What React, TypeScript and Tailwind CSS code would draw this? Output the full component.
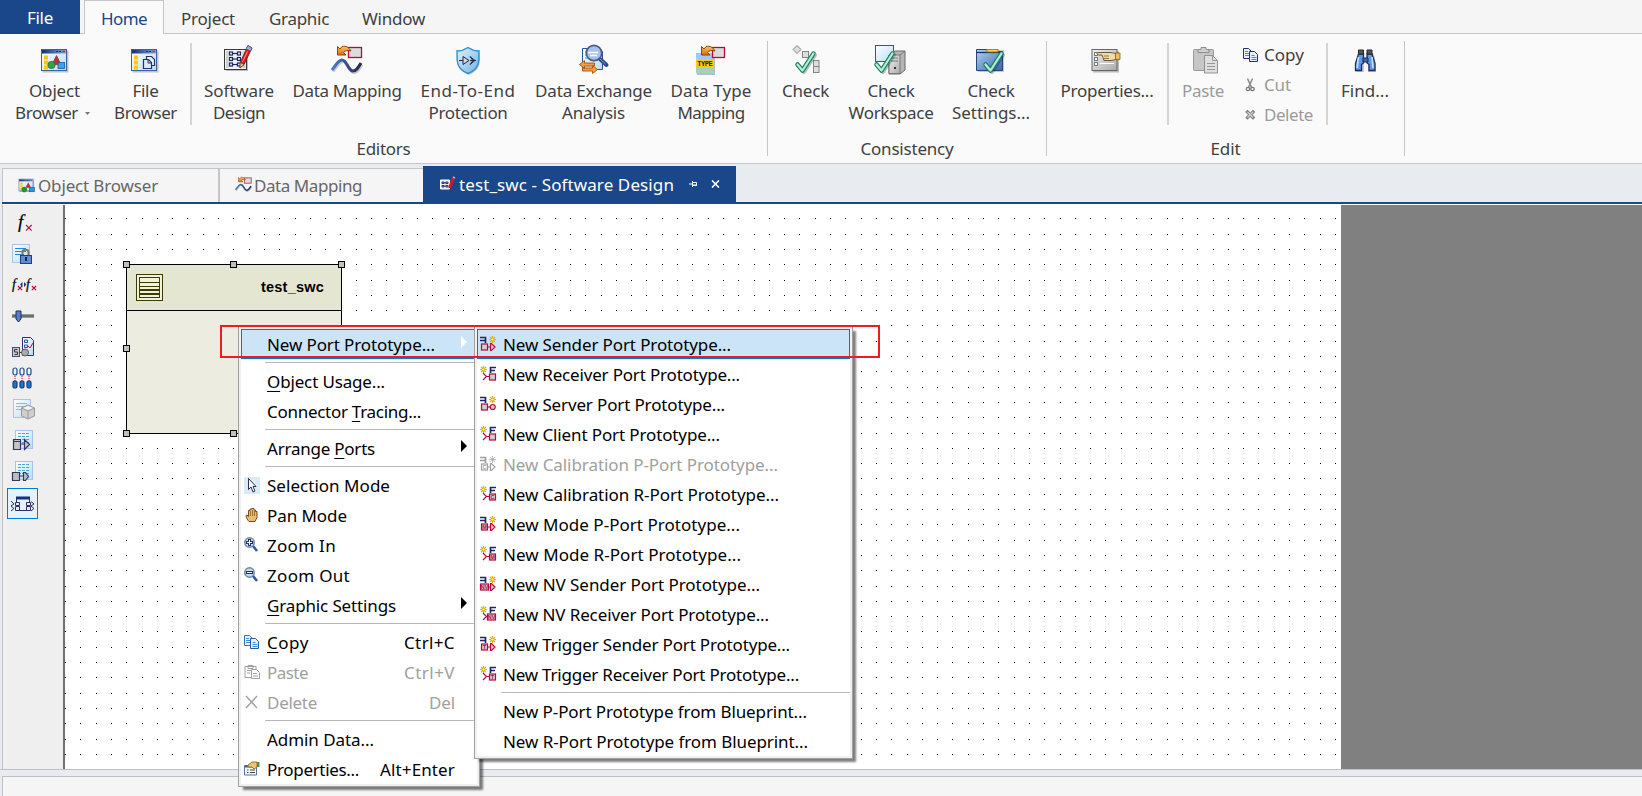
import { useLayoutEffect, useRef } from "react";
import type { ReactNode } from "react";

/* Text that spreads its letters over a given width. */
function Fit({ w, children }: { w: number; children: ReactNode }) {
  const ref = useRef<HTMLSpanElement>(null);
  useLayoutEffect(() => {
    const el = ref.current;
    if (!el) return;
    el.style.letterSpacing = "0px";
    const n = (el.textContent || "").length;
    const natural = el.getBoundingClientRect().width;
    el.style.letterSpacing = `${(w - natural) / n}px`;
  }, [w]);
  return (
    <span ref={ref} className="inline-block whitespace-pre">
      {children}
    </span>
  );
}

function Defs() {
  return (
    <svg width="0" height="0" className="absolute">
      <defs>
        <linearGradient id="title" x1="0" x2="1">
          <stop offset="0" stopColor="#12307c" />
          <stop offset="1" stopColor="#7fa6dd" />
        </linearGradient>
        <linearGradient id="pane" x1="0" x2="1" y1="0" y2="1">
          <stop offset="0" stopColor="#ffffff" />
          <stop offset="1" stopColor="#b9dcf5" />
        </linearGradient>
        <linearGradient id="wave" x1="0" x2="1">
          <stop offset="0" stopColor="#4a7fc0" />
          <stop offset="1" stopColor="#25254f" />
        </linearGradient>
        <linearGradient id="blue" x1="0" x2="1" y1="0" y2="1">
          <stop offset="0" stopColor="#e3f2fc" />
          <stop offset="1" stopColor="#6fb2e6" />
        </linearGradient>
        <linearGradient id="folder" x1="0" x2="1" y1="0" y2="1">
          <stop offset="0" stopColor="#b5d3ee" />
          <stop offset="1" stopColor="#3566ae" />
        </linearGradient>
        <linearGradient id="grey" x1="0" x2="1" y1="0" y2="1">
          <stop offset="0" stopColor="#f4f4f4" />
          <stop offset="1" stopColor="#a9a9a9" />
        </linearGradient>
        <linearGradient id="orange" x1="0" x2="0" y1="0" y2="1">
          <stop offset="0" stopColor="#ffc26b" />
          <stop offset="1" stopColor="#d8690f" />
        </linearGradient>
      </defs>
    </svg>
  );
}

const Svg = ({ s, v, children }: { s: number; v?: number; children: ReactNode }) => (
  <svg width={s} height={s} viewBox={`0 0 ${v || s} ${v || s}`} fill="none" className="shrink-0 overflow-visible">
    {children}
  </svg>
);

const Win = () => (
  <>
    <rect x="4.5" y="6.5" width="26" height="22" fill="#000" opacity=".22" />
    <rect x="3.5" y="5.5" width="25" height="21" fill="url(#pane)" stroke="#3d61a0" />
    <rect x="4" y="6" width="24" height="3.5" fill="url(#title)" />
    <path d="M18 7.5h2M21 7.5h2" stroke="#17306f" />
    <path d="M24.500 7.500h2.500" stroke="#e02020" strokeWidth="1.500" />
    <path d="M8 11.500v14" stroke="#ffc800" strokeWidth="4" strokeDasharray="4 1" />
  </>
);
const Tick = ({ x = 0, y = 0 }: { x?: number; y?: number }) => (
  <g transform={`translate(${x} ${y})`} strokeLinecap="round" strokeLinejoin="round">
    <path d="M3 14l5 6L19 3" transform="translate(1 1)" stroke="#000" opacity=".25" strokeWidth="4" />
    <path d="M2.500 13.500l5 6L18.500 2.500" stroke="#1c8068" strokeWidth="4.500" />
    <path d="M2.500 13.500l5 6L18.500 2.500" stroke="#b5f0d5" strokeWidth="2.200" />
  </g>
);
const OrangeArrow = () => (
  <path
    d="M6.500 2.500v8.500h8.500l-2.500-2.500c2-2 4.500-2.500 7.500-1.500C18 3.500 15 1.500 11 2.500L9 5z"
    fill="url(#orange)"
    stroke="#8a4508"
    strokeLinejoin="round"
  />
);

const ObjBrowser = () => (
  <Svg s={32}>
    <g transform="translate(-1 0)">
      <Win />
      <path d="M18.500 11.500l-4.500 9h9z" fill="#c23330" stroke="#7c1c1c" strokeWidth=".6" />
      <circle cx="13.500" cy="21" r="3.700" fill="#33a04c" stroke="#176a2c" strokeWidth=".6" />
      <rect x="20" y="18.500" width="6.500" height="6" fill="#38a2ee" stroke="#12589d" strokeWidth=".8" />
    </g>
  </Svg>
);
const FileBrowser = () => (
  <Svg s={32}>
    <g transform="translate(-2 0)">
      <Win />
      <path d="M18.500 21.500v-9h5l3 3v6z" fill="#eef4fb" stroke="#26306b" strokeWidth="1.200" />
      <path d="M15.500 24.500v-9h5l3 3v6z" fill="#dfeaf7" stroke="#26306b" strokeWidth="1.200" />
      <path d="M20 15.500v3.500h3.500" stroke="#26306b" />
    </g>
  </Svg>
);
const SwDesign = () => (
  <Svg s={32}>
    <rect x="3" y="7" width="22" height="20" fill="#000" opacity=".25" />
    <rect x="1.500" y="5.500" width="22" height="20" fill="#f2f2f2" stroke="#383838" />
    <path d="M3 7h2.500v17H3zM19.500 7h3v17h-3z" fill="#cfcfcf" />
    {[8, 13.5, 19].map((y) => (
      <g key={y} stroke="#1c2766" strokeWidth="1.200">
        <rect x="6.500" y={y} width="3" height="3" />
        <rect x="14.500" y={y} width="3" height="3" />
        <path d={`M10 ${y + 1.5}h4`} />
      </g>
    ))}
    <path d="M25 1.500l4 2.500-8 16.500-4 3.500.500-6z" fill="#d61a20" stroke="#6a1318" strokeWidth=".8" />
    <path d="M25 1.500l4 2.500-1.500 3-4.500-2z" fill="#9faed2" stroke="#4a4a72" strokeWidth=".7" />
    <path d="M17.200 18.500l3.800 2-4 3.500z" fill="#e8c690" stroke="#333" strokeWidth=".6" />
    <path d="M24.500 7.500l-5 10.500" stroke="#ff7a70" strokeWidth="1.200" />
  </Svg>
);
const DataMap = ({ s = 32 }: { s?: number }) => (
  <Svg s={s} v={32}>
    <rect x="17.500" y="3.500" width="13" height="10" fill="#dcdcdc" stroke="#b8093d" strokeWidth="1.300" />
    <OrangeArrow />
    <path d="M1 26C6 19 8 16 11 16c5 0 6 11 11 11 3 0 5-3 8-8" transform="translate(1 1.500)" stroke="#000" opacity=".2" strokeWidth="3" />
    <path d="M1 26C6 19 8 16 11 16c5 0 6 11 11 11 3 0 5-3 8-8" stroke="url(#wave)" strokeWidth="3" />
  </Svg>
);
const Shield = () => (
  <Svg s={32}>
    <path d="M16 3.500c3 2 6.500 3.500 11 3.500-1 4 4 16.500-11 22.500C1 23.500 6 11 5 7c4.500 0 8-1.500 11-3.500z" fill="#000" opacity=".2" transform="translate(1 1.500)" />
    <path d="M16 3.500c3 2 6.500 3.500 11 3.500-1 4 4 16.500-11 22.500C1 23.500 6 11 5 7c4.500 0 8-1.500 11-3.500z" fill="url(#blue)" stroke="#2d8fd0" strokeWidth="1.400" />
    <path d="M7 16.500h4m7 0h6M11 12.500v8l6-4zM18 12.500l5 4-5 4 3-4z" fill="#d5d5de" stroke="#26264a" />
  </Svg>
);
const DataExchange = () => (
  <Svg s={32}>
    <path d="M4.500 4.500h17l3 3v18h-20z" fill="url(#pane)" stroke="#28529b" />
    <path d="M7 8h5M7 11h4M7 14h5" stroke="#2c96dc" />
    <path d="M22 15l6.500 6" stroke="#26488b" strokeWidth="4" strokeLinecap="round" />
    <path d="M21.500 14.500l6 5.500" stroke="#7fa6dd" strokeWidth="1" />
    <circle cx="16" cy="9" r="7.700" fill="#a7c3ea" stroke="#505a80" strokeWidth="1.700" />
    <path d="M10 8.500h10M12 11.500h7" stroke="#fff" strokeWidth="1.300" />
    <path d="M1.500 20.500l5-4v2.500h10v3h-10v2.500zM19.500 25.500l-5-4v2.500h-10v3h10v2.500z" fill="#ff9c3c" stroke="#a0530d" strokeWidth=".9" />
  </Svg>
);
const TypeMap = () => (
  <Svg s={32}>
    <rect x="2" y="10" width="18" height="21" fill="#000" opacity=".25" />
    <rect x="1" y="9" width="18" height="6.500" fill="#9ccaff" />
    <rect x="1" y="15.500" width="18" height="7.500" fill="#ffc917" />
    <rect x="1" y="23" width="18" height="6.500" fill="#a0d3bf" />
    <text x="10" y="22" textAnchor="middle" textLength="15.500" fontSize="7" fontWeight="bold" fontFamily="Liberation Mono, monospace" fill="#222">
      TYPE
    </text>
    <rect x="17.500" y="3.500" width="12" height="10" fill="#dcdcdc" stroke="#b8093d" strokeWidth="1.300" />
    <OrangeArrow />
  </Svg>
);
const CheckIcon = () => (
  <Svg s={32}>
    <g fill="#dedede" stroke="#858585">
      <path d="M7 1.500l4 4-4 4-4-4z" />
      <rect x="12.500" y="7.500" width="6" height="6" />
      <rect x="23.500" y="16.500" width="5.500" height="6" />
      <rect x="23.500" y="22.500" width="5.500" height="6" />
    </g>
    <Tick x={5} y={7} />
  </Svg>
);
const CheckWs = () => (
  <Svg s={32}>
    <g transform="translate(-1 0)">
      <rect x="1.500" y="1.500" width="18" height="16" fill="url(#pane)" stroke="#2c5796" />
      <path d="M15 11l6-4h10v19l-5 4H15z" fill="#b5b5b5" stroke="#6b6b6b" />
      <path d="M15 11h11v18.500H15z" fill="url(#grey)" stroke="#777" />
      <path d="M26 11l5-4" stroke="#777" />
      <path d="M17 14h7M17 17h7" stroke="#777" />
      <path d="M20 24h2" stroke="#333" strokeWidth="2" />
      <Tick x={0} y={7} />
    </g>
  </Svg>
);
const CheckSet = () => (
  <Svg s={32}>
    <path d="M2 6h27v22H3z" fill="#000" opacity=".2" />
    <path d="M1.500 26.500v-21h10l2 2h14v19z" fill="url(#folder)" stroke="#264681" />
    <path d="M1.500 8.500h26" stroke="#173268" strokeWidth="1.300" />
    <rect x="12" y="5.500" width="11" height="2.500" fill="#ffd24a" stroke="#9a7114" strokeWidth=".8" />
    <Tick x={8} y={7} />
  </Svg>
);
const Props = () => (
  <Svg s={32}>
    <rect x="2" y="7" width="26" height="21.500" fill="#000" opacity=".25" />
    <rect x="1" y="5.500" width="25" height="21" fill="url(#grey)" stroke="#666" />
    <g fill="#fff" stroke="#777">
      <rect x="3.500" y="8.500" width="3" height="3" />
      <rect x="3.500" y="13.500" width="3" height="3" />
      <rect x="3.500" y="18.500" width="3" height="3" />
    </g>
    <path d="M9 19.500h14" stroke="#fff" />
    <path d="M6 9.500c0-1 1-1 2-1h10c3 0 4 .5 7 1v6c-2 0-3 1-5 1h-7l-1-3-1-2.500H7.500z" fill="#f2dbab" stroke="#5c4827" strokeWidth=".9" />
    <path d="M24.500 9h4.500v6.500h-4.500z" fill="#f0bd58" stroke="#855b15" strokeWidth=".8" />
    <path d="M13 12h5M13 14.500h5" stroke="#765a2b" strokeWidth=".8" />
  </Svg>
);
const PasteBig = () => (
  <Svg s={32}>
    <rect x="6.500" y="5.500" width="20" height="21" rx="1" fill="#c6c6c6" stroke="#989898" />
    <path d="M11 8.500v-3h3v-2h5v2h3v3z" fill="#cfcfcf" stroke="#8d8d8d" />
    <path d="M17.500 11.500h8l5 5v12.500h-13z" fill="#dfdfdf" stroke="#929292" />
    <path d="M25.500 11.500v5h5M20 19.500h8M20 22.500h8M20 25.500h8" stroke="#999" />
  </Svg>
);
const FindIcon = () => (
  <Svg s={32}>
    <path d="M7 13c1-2 1-4 2-5h5v19H6.500zM18 8h5c1 2 1 3 2 5l1 14h-8z" fill="#000" opacity=".2" transform="translate(1 1)" />
    <path d="M9.500 10h5v9l-2 1.500v6h-6v-7zM23 10h-5v9l2 1.500v6h6v-7z" fill="#5b9ae6" stroke="#202a5c" strokeWidth="1.300" />
    <path d="M14 14h5v4h-5z" fill="#3c67ac" stroke="#202a5c" />
    <path d="M9.500 13l-1.500 11M23 13l1 11" stroke="#c4dfff" strokeWidth="1.700" />
    <path d="M9.500 6h5v4h-5zM18 6h5v4h-5z" fill="#555" stroke="#292929" />
  </Svg>
);
const CopySm = ({ soft = false }: { soft?: boolean }) => (
  <Svg s={16}>
    <path d="M.5 1.500h5l3 3v7h-8z" fill="#e6f3fd" stroke={soft ? "#4169b2" : "#2d2c6c"} />
    <path d="M6.500 4.500h5l3 3v7h-8z" fill="#e0f0fd" stroke={soft ? "#31589e" : "#2d2c6c"} />
    <path d="M2 4.500h3M2 6.500h4M2 8.500h4M8.500 8.500h3M8.500 10.500h5M8.500 12.500h5" stroke="#3493dc" />
  </Svg>
);
const CutSm = () => (
  <Svg s={16}>
    <path d="M4.500 1.500l4 9M9.500 1.500l-4 9" stroke="#888" strokeWidth="1.500" />
    <circle cx="5" cy="12" r="1.700" stroke="#777" strokeWidth="1.300" />
    <circle cx="9.500" cy="12" r="1.700" stroke="#777" strokeWidth="1.300" />
  </Svg>
);
const DelSm = () => (
  <Svg s={16}>
    <path d="M4.500 5l5.500 5.500M10 5l-5.500 5.500" stroke="#808080" strokeWidth="3.200" strokeLinecap="square" />
    <path d="M4.500 5l5.500 5.500M10 5l-5.500 5.500" stroke="#d2d2d2" strokeWidth="1.300" />
  </Svg>
);

function Big({ box, icon, lines }: { box: string; icon: ReactNode; lines: [string, number][] }) {
  return (
    <div className={`flex shrink-0 flex-col items-center ${box}`}>
      {icon}
      <div className="mt-[4px] flex flex-col items-center leading-[22px]">
        {lines.map(([t, w]) => (
          <Fit key={t} w={w}>
            {t}
          </Fit>
        ))}
      </div>
    </div>
  );
}
const Thick = () => <div className="-mt-px h-[82px] w-[2px] shrink-0 bg-[#d4d4d4]" />;

function Group({ box, label, w, children }: { box: string; label: string; w: number; children: ReactNode }) {
  return (
    <div className={`relative flex shrink-0 flex-col pt-[10px] ${box}`}>
      <div className="flex h-[93px]">{children}</div>
      <div className="pr-px text-center leading-[23px]">
        <Fit w={w}>{label}</Fit>
      </div>
      <div className="absolute top-[7px] right-0 h-[115px] w-px bg-[#c6c6c6]" />
    </div>
  );
}

function Ribbon() {
  return (
    <div className="flex h-[130px] border-b border-[#c6c6c6] bg-[#fafafa] text-[#3f3f3f]">
      <Group box="w-[768px]" label="Editors" w={54}>
        <div className="flex w-[109px] shrink-0 flex-col items-center">
          <ObjBrowser />
          <div className="mt-[4px] w-full leading-[22px]">
            <div className="text-center">
              <Fit w={51}>Object</Fit>
            </div>
            <div className="flex items-center pl-[15px]">
              <Fit w={63}>Browser</Fit>
              <svg width="5" height="3" className="ml-[7px]">
                <path d="M0 0h5L2.500 3z" fill="#777" />
              </svg>
            </div>
          </div>
        </div>
        <Big box="w-[73px]" icon={<FileBrowser />} lines={[["File", 26], ["Browser", 63]]} />
        <div className="w-[8px] shrink-0" />
        <Thick />
        <Big box="w-[94px]" icon={<SwDesign />} lines={[["Software", 70], ["Design", 52]]} />
        <Big box="w-[122px]" icon={<DataMap />} lines={[["Data Mapping", 109]]} />
        <Big box="w-[120px]" icon={<Shield />} lines={[["End-To-End", 95], ["Protection", 79]]} />
        <Big box="w-[131px]" icon={<DataExchange />} lines={[["Data Exchange", 117], ["Analysis", 63]]} />
        <Big box="w-[104px]" icon={<TypeMap />} lines={[["Data Type", 81], ["Mapping", 67]]} />
      </Group>
      <Group box="w-[279px]" label="Consistency" w={93}>
        <Big box="w-[75px]" icon={<CheckIcon />} lines={[["Check", 47]]} />
        <Big box="w-[96px]" icon={<CheckWs />} lines={[["Check", 47], ["Workspace", 85]]} />
        <Big box="w-[104px]" icon={<CheckSet />} lines={[["Check", 47], ["Settings...", 78]]} />
      </Group>
      <Group box="w-[358px]" label="Edit" w={30}>
        <Big box="w-[120px]" icon={<Props />} lines={[["Properties...", 93]]} />
        <Thick />
        <div className="text-[#9a9a9a]">
          <Big box="w-[68px]" icon={<PasteBig />} lines={[["Paste", 42]]} />
        </div>
        <div className="-mt-[4px] flex w-[89px] shrink-0 flex-col pl-[6px] leading-[30px]">
          <div className="flex h-[30px] items-center gap-[5px]">
            <CopySm />
            <Fit w={40}>Copy</Fit>
          </div>
          <div className="flex h-[30px] items-center gap-[5px] text-[#9a9a9a]">
            <CutSm />
            <Fit w={27}>Cut</Fit>
          </div>
          <div className="flex h-[30px] items-center gap-[5px] text-[#9a9a9a]">
            <DelSm />
            <Fit w={49}>Delete</Fit>
          </div>
        </div>
        <Thick />
        <Big box="w-[74px]" icon={<FindIcon />} lines={[["Find...", 48]]} />
      </Group>
    </div>
  );
}

function TabRow() {
  return (
    <div className="flex h-[34px] bg-[#f5f5f5] leading-[37px] text-[#3f3f3f]">
      <div className="w-[80px] bg-[#19478a] text-center leading-[35px] text-white">
        <Fit w={26}>File</Fit>
      </div>
      <div className="w-[4px] border-b border-[#c6c6c6]" />
      <div className="w-[80px] border-x border-t border-[#c6c6c6] bg-[#fafafa] text-center leading-[35px] text-[#19478a]">
        <Fit w={46}>Home</Fit>
      </div>
      <div className="flex flex-1 border-b border-[#c6c6c6] pl-[17px]">
        <div className="w-[88px]">
          <Fit w={54}>Project</Fit>
        </div>
        <div className="w-[93px]">
          <Fit w={60}>Graphic</Fit>
        </div>
        <Fit w={63}>Window</Fit>
      </div>
    </div>
  );
}

function DocTabs() {
  return (
    <div className="flex h-[40px] items-end bg-[#e8ebf0] pl-[2px]">
      <div className="flex h-full flex-1 items-end border-b-2 border-[#19478a] leading-[33px] text-[#666]">
        <div className="flex h-[34px] w-[217px] items-center border border-b-0 border-[#c6c6c6] bg-[#f5f5f5] pl-[14px]">
          <div className="-mt-[2px]">
            <Svg s={18} v={32}>
              <Win />
              <path d="M20 11l-5 10h10z" fill="#c23330" />
              <circle cx="13" cy="24" r="5" fill="#279040" />
              <rect x="22" y="20" width="9" height="8" fill="#2b93e3" stroke="#12589d" />
            </Svg>
          </div>
          <span className="pl-[3px]">
            <Fit w={120}>Object Browser</Fit>
          </span>
        </div>
        <div className="flex h-[34px] w-[204px] items-center border-t border-l border-[#c6c6c6] bg-[#f5f5f5] pl-[15px]">
          <div className="-mt-[2px]">
            <DataMap s={17} />
          </div>
          <span className="pl-[2px]">
            <Fit w={108}>Data Mapping</Fit>
          </span>
        </div>
        <div className="flex h-[36px] w-[313px] items-center bg-[#19478a] pl-[17px] text-white">
          <Svg s={16}>
            <path d="M.5 4h9v9h-9z" fill="#e8e8f0" stroke="#fff" />
            <path d="M2 6h2v1.500H2zM6 6h2v1.500H6zM2 9.500h2V11H2zM6 9.500h2V11H6zM4 6.800h2M4 10.200h2" stroke="#1c2766" strokeWidth=".9" />
            <path d="M13.500 1.500L9.500 12" stroke="#d9181e" strokeWidth="3" />
            <path d="M13 1l2 1" stroke="#aab4dd" strokeWidth="1.500" />
          </Svg>
          <span className="pl-[3px]">
            <Fit w={215}>test_swc - Software Design</Fit>
          </span>
          <svg width="8" height="8" className="ml-[15px]" fill="none" stroke="#fff">
            <path d="M0 4h3M3.500 1v6M4 2.500h3.500v3H4M4 5h4" />
          </svg>
          <svg width="9" height="8" className="ml-[14px]" fill="none" stroke="#fff" strokeWidth="1.600">
            <path d="M1 .5l7 7M8 .5l-7 7" />
          </svg>
        </div>
      </div>
    </div>
  );
}

const Fx = ({ x, y, f }: { x: number; y: number; f: number }) => (
  <g>
    <text x={x} y={y} fontSize={f} fontStyle="italic" fontFamily="Liberation Serif, serif" fill="#000" stroke="#000" strokeWidth=".2">
      f
    </text>
    <path d={`M${x + f * 0.42} ${y - 3}l${f * 0.3} ${f * 0.3}m0 ${-f * 0.3}l${-f * 0.3} ${f * 0.3}`} stroke="#b8093d" strokeWidth="1.100" />
  </g>
);
const Sheet = ({ x, y, soft }: { x: number; y: number; soft?: boolean }) => (
  <g transform={`translate(${x} ${y})`}>
    <rect x=".5" y=".5" width="17" height="18" fill="url(#pane)" stroke="#a9c4ec" />
    <path d="M3 4.500h11M3 7.500h11M3 10.500h9" stroke={soft ? "#a8b1c0" : "#2b85d2"} />
  </g>
);
const Table = ({ x }: { x: number }) => (
  <g transform={`translate(${x} 2)`}>
    <rect x=".5" y=".5" width="17" height="18" fill="url(#pane)" stroke="#a9c4ec" />
    <path d="M3 3.500h12M3 6.500h12M3 9.500h12M3 12.500h12" stroke="#4aaad0" strokeDasharray="3 1" />
  </g>
);

const tools: ReactNode[] = [
  <Fx x={7} y={17} f={19} />,
  <>
    <Sheet x={1} y={2} />
    <path d="M11.500 13v-3c0-3 6-3 6 0v3" stroke="#777" strokeWidth="2" />
    <rect x="9.500" y="13.500" width="11" height="8" fill="#5f8ed0" stroke="#263e7c" />
    <path d="M15 15v4" stroke="#102050" strokeWidth="2" />
  </>,
  <>
    <Fx x={1} y={16} f={14} />
    <path d="M9 11.500l2.500-2.500v5zM15.500 11.500l-2.500-2.500v5z" fill="#29316d" />
    <Fx x={15} y={16} f={14} />
  </>,
  <>
    <path d="M1 12h22" stroke="#999" strokeWidth="4" />
    <path d="M1 12h22" stroke="#444" />
    <path d="M5 7h5v8l-2.500 3-2.500-3z" fill="#557fc0" stroke="#1c2d6c" />
  </>,
  <>
    <path d="M11.500 2.500h8l3 3v15h-11z" fill="url(#pane)" stroke="#2c3567" />
    <path d="M13.500 5h3v2.500h-3zM13.500 10h3v2.500h-3z" stroke="#28529b" />
    <path d="M17 11l2 2 3-5" stroke="#b8093d" />
    <rect x="1.500" y="12.500" width="7" height="9" fill="#ccc" stroke="#444a70" />
    <path d="M6.500 14.500h-3v2.500h3v2.500h-3M9 17.500h2" stroke="#333" />
    <circle cx="14" cy="17.500" r="3.500" fill="#aaa" stroke="#555a78" />
  </>,
  <>
    {[4, 11, 18].map((x) => (
      <g key={x}>
        <rect x={x - 2} y="2" width="4" height="7" rx="2" fill="#e9f5ff" stroke="#1f4d94" strokeWidth="1.200" />
        <path d={`M${x} 10v5`} stroke="#b8093d" strokeDasharray="1 1" />
        <rect x={x - 2} y="15" width="4" height="7" rx="1.500" fill="#1d77c8" stroke="#173b7c" strokeWidth="1.200" />
      </g>
    ))}
  </>,
  <>
    <Sheet x={2} y={2} soft />
    <path d="M10.500 11l6.500-3 6.500 3v8l-6.500 3-6.500-3z" fill="#cecece" stroke="#999" />
    <path d="M10.500 11l6.500 3 6.500-3M17 14v8" stroke="#999" />
    <path d="M12 11l5-2 5 2-5 2z" fill="#f2f2f2" />
  </>,
  <>
    <Table x={4} />
    <path d="M2.500 11.500h7v10h-7zM2.500 13.500h7M10 16h3M13.500 11.500l5 5-5 5z" fill="#c4c4c9" stroke="#35355e" strokeWidth="1.200" />
  </>,
  <>
    <Table x={4} />
    <path d="M1.500 13.500h7v8h-7zM9 17h3M12.500 13.500h2l3 4-3 4h-2z" fill="#bcbcc1" stroke="#35355e" strokeWidth="1.200" />
  </>,
  <>
    <rect x="5.500" y="5.500" width="13" height="13" fill="#e5f2fd" stroke="#2e3060" />
    <path d="M5 6h14" stroke="#17307c" strokeWidth="3" />
    <path d="M4.500 10.500h4v3h-4zM4.500 14.500h4v4h-4zM15.500 10.500h4v3h-4zM15.500 14.500h4v4h-4zM0 9l3 3-3 2M0 14l3 2.500L0 19M20 9.500l3 2.500-3 2M20 14l3 2.500-3 2.500" stroke="#2e3060" fill="#e7e7ef" />
  </>,
];

function ToolColumn() {
  return (
    <div className="flex w-[62px] shrink-0 flex-col border-r-2 border-[#707070] bg-[#efefef] pt-[2px] pl-[4px]">
      {tools.map((t, i) => (
        <div
          key={i}
          className={`flex h-[31px] w-[31px] shrink-0 items-center justify-center ${
            i === 9 ? "mt-[2px] border border-[#0078d7] bg-[#e5f1fb]" : ""
          }`}
        >
          <Svg s={24}>{t}</Svg>
        </div>
      ))}
    </div>
  );
}

function dotGrid() {
  let d = "";
  for (let r = 0; r < 36; r++) {
    const y = 13 + Math.round(0.35 + r * 15.3);
    for (let c = 0; c < 84; c++) d += `M${Math.round(c * 15.3)} ${y}h1v1h-1z`;
  }
  return d;
}

const handles = [
  "left-[-4px] top-[-4px]",
  "left-[103px] top-[-4px]",
  "left-[211px] top-[-4px]",
  "left-[-4px] top-[80px]",
  "left-[-4px] top-[165px]",
  "left-[103px] top-[165px]",
];

function Canvas() {
  return (
    <div className="relative w-[1276px] shrink-0 bg-white">
      <svg width="1276" height="564" shapeRendering="crispEdges" className="block">
        <path d={dotGrid()} fill="#000" />
      </svg>
      <div className="absolute top-[59px] left-[61px] h-[170px] w-[216px] border border-black bg-[#ecece0]">
        <div className="flex h-[46px] items-center justify-between border-b border-black bg-[#e5e6d2] pr-[17px] pl-[9px]">
          <svg width="27" height="27" fill="none" stroke="#3c3b00" shapeRendering="crispEdges">
            <path d="M.5.5h26v26H.5z" fill="#f1f1dc" />
            <path d="M3.500 3.500h20v20h-20zM4 8.500h19M4 12.500h19" />
            <path d="M4 16h19M4 20h19" strokeWidth="2" />
          </svg>
          <span className="text-[14.5px] font-bold text-black" style={{ fontFamily: "'Liberation Sans', Arial, sans-serif" }}>
            <Fit w={63}>test_swc</Fit>
          </span>
        </div>
        {handles.map((h) => (
          <div key={h} className={`absolute h-[7px] w-[7px] border border-black bg-[#c0c0c0] ${h}`} />
        ))}
      </div>
    </div>
  );
}

const R = "#b8093d";
function PortIcon({ recv, tag = "", off, round }: { recv?: boolean; tag?: string; off?: boolean; round?: boolean }) {
  const red = off ? "#a0a0a0" : R;
  const navy = off ? "#a0a0a0" : "#22246c";
  const gold = off ? "#a8a8a8" : "#e0ac10";
  const sx = recv ? 3.5 : 12.5;
  const wide = tag === "NV";
  const bx = recv ? (wide ? 7.5 : 9.5) : wide ? 0.5 : 1.5;
  const bw = wide ? 8 : 6;
  return (
    <Svg s={16}>
      <path
        d={`M${sx} 0v7M${sx - 3.5} 3.500h7M${sx - 2.5} 1l5 5M${sx + 2.5} 1l-5 5`}
        stroke={gold}
        strokeWidth={off ? 0.8 : 1.2}
      />
      {!off && <circle cx={sx} cy="3.500" r="1.100" fill="#fff2a0" />}
      {recv ? (
        <path d="M16 1.500h-5.500v5.500M10.500 4.500H15" stroke={navy} strokeWidth="1.700" />
      ) : (
        <path d="M0 1.500h5.500v5.500M0 4.500h5" stroke={navy} strokeWidth="1.700" />
      )}
      <rect x={bx} y="8" width={bw} height="6" fill={off ? "#fff" : "#cfcfcf"} stroke={red} strokeWidth="1.200" />
      {recv ? (
        <path d={`M3 7l3.500 3.500L3 14M6.500 10.500H${bx}`} stroke={red} strokeWidth="1.200" />
      ) : round ? (
        <>
          <path d="M7.500 11h3" stroke={red} strokeWidth="1.200" />
          <circle cx="12.700" cy="11" r="2.500" fill="#cfcfcf" stroke={red} strokeWidth="1.200" />
        </>
      ) : (
        <path d="M8 11h2.500M10.500 7.500h1l3.500 3.500-3.500 3.500h-1z" fill={off ? "#fff" : "#cfcfcf"} stroke={red} strokeWidth="1.200" />
      )}
      {tag && (
        <text x={bx + bw / 2} y="13" fontSize="5.500" fontWeight="bold" textAnchor="middle" fontFamily="Liberation Sans, sans-serif" fill={red}>
          {tag}
        </text>
      )}
    </Svg>
  );
}

const Zoomer = ({ plus }: { plus?: boolean }) => (
  <Svg s={16}>
    <path d="M9 9l4 5" stroke="#285aa5" strokeWidth="2.600" />
    <circle cx="5.500" cy="5.500" r="4.700" fill="#c5d9f2" stroke="#6b83aa" strokeWidth="1.500" />
    <path d={plus ? "M2 5.500h7M5.500 2v7" : "M2 5.500h7"} stroke="#20346c" strokeWidth="3" />
    <path d={plus ? "M3 5.500h5M5.500 3v5" : "M3 5.500h5"} stroke="#fff" />
  </Svg>
);
const Pointer = () => (
  <Svg s={16}>
    <rect width="16" height="17" fill="#dbeaf7" />
    <path d="M4.500 1.500v11l2.500-2.500 2 5 2-1-2-4.500h3z" fill="#fff" stroke="#283054" />
  </Svg>
);
const Hand = () => (
  <Svg s={16}>
    <path d="M5 14.500c-1.500-1.500-3-4-3-6l1-.5 1.500 1.500v-6H6V2h2v-.5h2V3h1.500v1.500h1.500v6l-2 4z" fill="#e8bd78" stroke="#764c14" />
    <path d="M6.500 4v5M8.500 3v6M10.500 4v5" stroke="#8b5c1c" strokeWidth=".8" />
  </Svg>
);
const PasteGrey = () => (
  <Svg s={16}>
    <path d="M1 2.500h11v11H1zM4 1.500h5v3H4z" stroke="#a0a0a0" />
    <path d="M3 6.500h4M3 9h3" stroke="#a0a0a0" />
    <path d="M7.500 5.500h5l3 3v6h-8z" fill="#fff" stroke="#a0a0a0" />
    <path d="M9 9.500h4M9 12h5" stroke="#a0a0a0" />
  </Svg>
);
const CrossGrey = () => (
  <Svg s={16}>
    <path d="M2 2l11 12M13 2L2 14" stroke="#a0a0a0" strokeWidth="1.400" />
  </Svg>
);
const PropsMenu = () => (
  <Svg s={16}>
    <path d="M.5 4.500h12v9.500H.5z" fill="#f3f6fb" stroke="#55719f" />
    <path d="M1 5.500h7" stroke="#3164b0" strokeWidth="2" />
    <path d="M3 9h1.500M6 9h5M3 11.500h1.500M6 11.500h5" stroke="#444" />
    <path d="M4 4l4-3h5v5l-3 2-2-2H4z" fill="#ecc66f" stroke="#99752a" />
    <path d="M13 1h2.500v5H13z" fill="#499455" />
  </Svg>
);

type Row = { t: ReactNode; w: number; icon?: ReactNode; key2?: [string, number]; arrow?: boolean; off?: boolean; hot?: boolean } | null;

const mainRows: Row[] = [
  { t: "New Port Prototype...", w: 168, arrow: true, hot: true },
  null,
  { t: <><u>O</u>bject Usage...</>, w: 118 },
  { t: <>Connector <u>T</u>racing...</>, w: 154 },
  null,
  { t: <>Arrange <u>P</u>orts</>, w: 108, arrow: true },
  null,
  { t: "Selection Mode", w: 123, icon: <Pointer /> },
  { t: "Pan Mode", w: 80, icon: <Hand /> },
  { t: "Zoom In", w: 69, icon: <Zoomer plus /> },
  { t: "Zoom Out", w: 83, icon: <Zoomer /> },
  { t: <><u>G</u>raphic Settings</>, w: 129, arrow: true },
  null,
  { t: <><u>C</u>opy</>, w: 42, icon: <CopySm soft />, key2: ["Ctrl+C", 51] },
  { t: "Paste", w: 41, icon: <PasteGrey />, key2: ["Ctrl+V", 51], off: true },
  { t: "Delete", w: 50, icon: <CrossGrey />, key2: ["Del", 26], off: true },
  null,
  { t: "Admin Data...", w: 107 },
  { t: "Properties...", w: 92, icon: <PropsMenu />, key2: ["Alt+Enter", 75] },
];
const portRows: Row[] = [
  { t: "New Sender Port Prototype...", w: 228, icon: <PortIcon />, hot: true },
  { t: "New Receiver Port Prototype...", w: 237, icon: <PortIcon recv /> },
  { t: "New Server Port Prototype...", w: 222, icon: <PortIcon round /> },
  { t: "New Client Port Prototype...", w: 217, icon: <PortIcon recv /> },
  { t: "New Calibration P-Port Prototype...", w: 275, icon: <PortIcon tag="C" off />, off: true },
  { t: "New Calibration R-Port Prototype...", w: 276, icon: <PortIcon recv tag="C" /> },
  { t: "New Mode P-Port Prototype...", w: 237, icon: <PortIcon tag="M" /> },
  { t: "New Mode R-Port Prototype...", w: 238, icon: <PortIcon recv tag="M" /> },
  { t: "New NV Sender Port Prototype...", w: 257, icon: <PortIcon tag="NV" /> },
  { t: "New NV Receiver Port Prototype...", w: 266, icon: <PortIcon recv tag="NV" /> },
  { t: "New Trigger Sender Port Prototype...", w: 287, icon: <PortIcon tag="T" /> },
  { t: "New Trigger Receiver Port Prototype...", w: 296, icon: <PortIcon recv tag="T" /> },
  null,
  { t: "New P-Port Prototype from Blueprint...", w: 304 },
  { t: "New R-Port Prototype from Blueprint...", w: 305 },
];

function Menu({ rows, box }: { rows: Row[]; box: string }) {
  return (
    <div
      className={`absolute top-[326px] border border-[#a0a0a0] bg-white p-[2px] text-[17px] text-black shadow-[4px_4px_2px_-1px_rgba(0,0,0,0.5)] outline-2 -outline-offset-3 outline-[#f0f0f0] ${box}`}
    >
      {rows.map((r, i) =>
        r === null ? (
          <div key={i} className="flex h-[7px] items-center pl-[24px]">
            <div className="h-px flex-1 bg-[#b8b8b8]" />
          </div>
        ) : (
          <div
            key={i}
            className={`flex h-[30px] items-center border pl-[2px] ${r.hot ? "border-[#0078d7] bg-[#cce4f7]" : "border-transparent"} ${
              r.off ? "text-[#a0a0a0]" : ""
            }`}
          >
            <div className="flex h-[16px] w-[23px] shrink-0 items-center">{r.icon}</div>
            <div className="flex-1 pt-[2px] leading-[28px] underline-offset-[3px]">
              <Fit w={r.w}>{r.t}</Fit>
            </div>
            {r.key2 && (
              <div className="pt-[2px] pr-[21px] leading-[28px]">
                <Fit w={r.key2[1]}>{r.key2[0]}</Fit>
              </div>
            )}
            {r.arrow && (
              <svg width="6" height="12" className="mr-[9px] mb-[5px]">
                <path d="M0 0l6 6-6 6z" fill={r.hot ? "#fff" : "#000"} />
              </svg>
            )}
          </div>
        ),
      )}
    </div>
  );
}

export default function App() {
  return (
    <div
      className="relative flex h-[796px] w-[1642px] flex-col overflow-hidden bg-[#e8ebf0] text-[17px]"
      style={{ fontFamily: "'Noto Sans', 'Open Sans', sans-serif" }}
    >
      <Defs />
      <TabRow />
      <Ribbon />
      <DocTabs />
      <div className="flex h-[566px] border-b border-[#c0c0c0] bg-[#e8ebf0] pl-[2px]">
        <div className="flex flex-1 border-t border-l border-t-white border-l-[#c0c0c0]">
          <ToolColumn />
          <Canvas />
          <div className="flex-1 bg-[#808080]" />
        </div>
      </div>
      <div className="mt-[6px] ml-[2px] flex-1 border-t border-l border-[#c0c0c0] bg-[#f5f5f5]" />
      <Menu rows={mainRows} box="left-[238px] w-[242px]" />
      <Menu rows={portRows} box="left-[474px] w-[379px]" />
      <div className="absolute top-[325px] left-[220px] h-[33px] w-[660px] border-2 border-[#ed1c24]" />
    </div>
  );
}
